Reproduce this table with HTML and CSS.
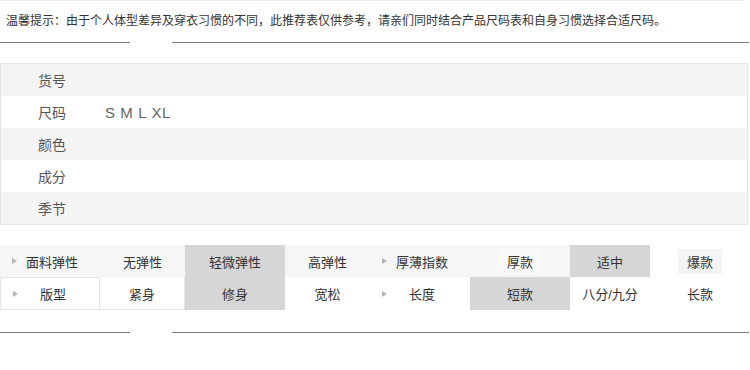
FILE: index.html
```html
<!DOCTYPE html>
<html lang="zh-CN">
<head>
<meta charset="UTF-8" />
<meta name="viewport" content="width=device-width, initial-scale=1.0">
<title>尺码推荐</title>
<link rel="stylesheet" href="styles.css">
</head>
<body>
<div class="page">
  <div class="tip">温馨提示：由于个人体型差异及穿衣习惯的不同，此推荐表仅供参考，请亲们同时结合产品尺码表和自身习惯选择合适尺码。</div>
  <div class="divider"><span class="line left"></span><span class="line right"></span></div>

  <div class="spec">
    <div class="spec-row"><span class="spec-key">货号</span><span class="spec-val"></span></div>
    <div class="spec-row"><span class="spec-key">尺码</span><span class="spec-val">S M L XL</span></div>
    <div class="spec-row"><span class="spec-key">颜色</span><span class="spec-val"></span></div>
    <div class="spec-row"><span class="spec-key">成分</span><span class="spec-val"></span></div>
    <div class="spec-row"><span class="spec-key">季节</span><span class="spec-val"></span></div>
  </div>

  <div class="attrs">
    <div class="cell label r1"><i class="arrow"></i><span>面料弹性</span></div>
    <div class="cell r1">无弹性</div>
    <div class="cell on">轻微弹性</div>
    <div class="cell r1">高弹性</div>
    <div class="cell label r1"><i class="arrow"></i><span>厚薄指数</span></div>
    <div class="cell r1"><b class="chip white">厚款</b></div>
    <div class="cell on">适中</div>
    <div class="cell"><b class="chip">爆款</b></div>

    <div class="cell label boxed"><i class="arrow"></i><span>版型</span></div>
    <div class="cell edge">紧身</div>
    <div class="cell on">修身</div>
    <div class="cell">宽松</div>
    <div class="cell label"><i class="arrow"></i><span>长度</span></div>
    <div class="cell on">短款</div>
    <div class="cell">八分/九分</div>
    <div class="cell">长款</div>
  </div>

  <div class="divider"><span class="line left"></span><span class="line right"></span></div>
</div>
</body>
</html>
```

FILE: styles.css
```css
body { margin:0; background:#fff; font-family:"Liberation Sans","Noto Sans CJK SC",sans-serif; color:#333; }
.page { width:750px; }

.tip { width:737px; height:40px; padding-left:6px; border-top:1px solid #ececec; font-size:12px; line-height:40px; color:#333; white-space:nowrap; }

.divider { display:flex; gap:42px; height:1px; margin-top:1px; }
.divider .line { height:1px; background:#7a7a7a; }
.divider .left { width:130px; }
.divider .right { width:577px; }

.spec { width:746px; margin-top:20px; border:1px solid #e6e6e6; }
.spec-row { display:flex; align-items:center; height:32px; font-size:14px; color:#555; }
.spec-row:nth-child(odd) { background:#f5f5f5; }
.spec-key { width:67px; padding-left:37px; }
.spec-val { font-size:15px; letter-spacing:0.6px; color:#666; }

.attrs { display:grid; grid-template-columns:100px 85px 100px 85px 100px 100px 80px 100px; grid-template-rows:32px 33px; margin-top:20px; margin-bottom:22px; font-size:13px; color:#333; }
.cell { display:flex; align-items:center; justify-content:center; box-sizing:border-box; }
.cell.r1 { background:#f6f6f6; }
.cell.on { background:#d6d6d6; }
.cell.label { justify-content:flex-start; padding-left:12px; }
.cell.label span { width:54px; margin-left:8px; text-align:center; }
.cell.boxed { border:1px solid #e6e6e6; }
.cell.edge { border-bottom:1px solid #e6e6e6; border-right:1px solid #e6e6e6; }
.arrow { width:0; height:0; border-top:3px solid transparent; border-bottom:3px solid transparent; border-left:5px solid #b5b5b5; }

.chip { font-weight:normal; padding:3px 9px; background:#f4f4f4; }
.chip.white { background:#f9f9f9; }
```
